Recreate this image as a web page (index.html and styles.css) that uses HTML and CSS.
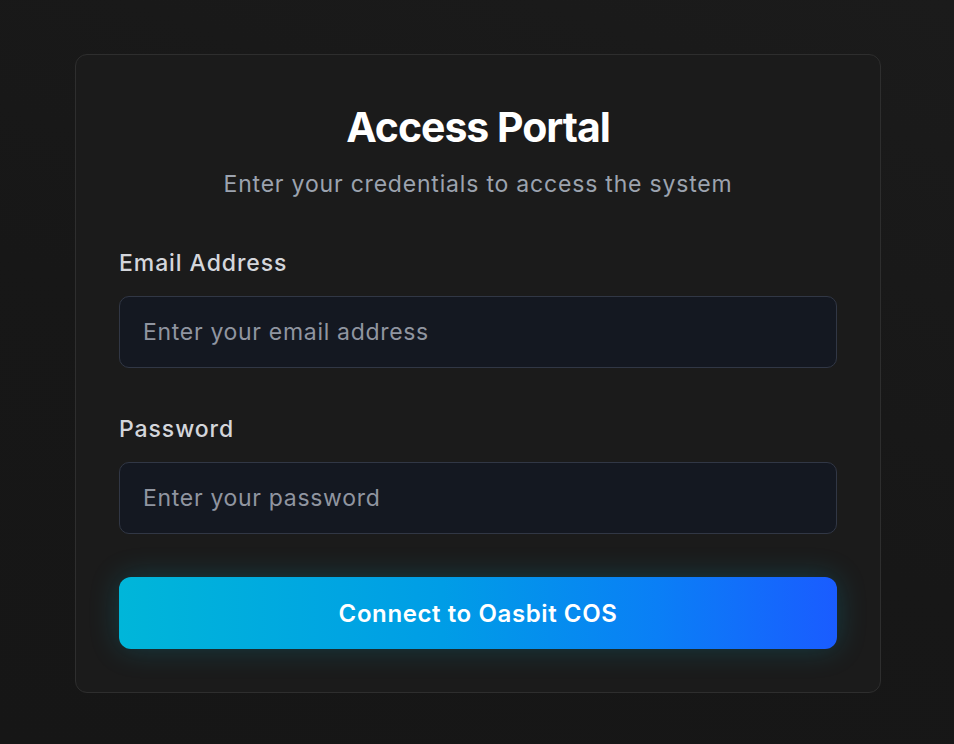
FILE: index.html
```html
<!DOCTYPE html>
<html lang="en">
<head>
  <meta charset="UTF-8">
  <meta name="viewport" content="width=device-width, initial-scale=1.0">
  <title>Access Portal</title>
  <link rel="stylesheet" href="styles.css">
</head>
<body>
  <div class="container">
    <form class="card" onsubmit="return false;">
      <h1 class="title">Access Portal</h1>
      <p class="subtitle">Enter your credentials to access the system</p>

      <div class="field">
        <label for="email">Email Address</label>
        <input type="email" id="email" placeholder="Enter your email address">
      </div>

      <div class="field">
        <label for="password">Password</label>
        <input type="password" id="password" placeholder="Enter your password">
      </div>

      <button type="submit" class="connect-btn">Connect to Oasbit COS</button>
    </form>
  </div>
</body>
</html>
```

FILE: styles.css
```css
* {
  box-sizing: border-box;
}

body {
  font-family: Inter, "Noto Sans", sans-serif;
  background: linear-gradient(200deg, #1b1b1b 0%, #171717 55%, #161616 100%);
  margin: 0;
  padding: 0;
  min-height: 100vh;
  color: #fff;
}

.container {
  padding: 54px 74px 0 75px;
}

.card {
  width: 806px;
  background-color: #1b1b1b;
  border: 1px solid #2e2e2e;
  border-radius: 12px;
  padding: 43px;
}

.title {
  margin: 0;
  text-align: center;
  font-size: 41px;
  font-weight: 700;
  letter-spacing: -0.025em;
  line-height: 59px;
}

.subtitle {
  margin: 11px 0 0;
  text-align: center;
  font-size: 23px;
  line-height: 32px;
  letter-spacing: 0.035em;
  color: #9ca3af;
}

.field {
  margin-top: 47px;
}

.field + .field {
  margin-top: 45px;
}

.field label {
  display: block;
  font-size: 23px;
  line-height: 32px;
  font-weight: 500;
  letter-spacing: 0.04em;
  color: #d4d6db;
  margin-bottom: 17px;
}

.field input {
  display: block;
  width: 100%;
  height: 72px;
  padding: 0 23px;
  background-color: #141821;
  border: 1px solid #313745;
  border-radius: 10px;
  font-family: inherit;
  font-size: 23px;
  letter-spacing: 0.03em;
  color: #e5e7eb;
  outline: none;
}

.field input::placeholder {
  color: #9095a0;
}

.connect-btn {
  display: block;
  width: 100%;
  height: 72px;
  margin-top: 43px;
  border: none;
  border-radius: 12px;
  background: linear-gradient(90deg, #00b6d9 0%, #009de6 45%, #0a7ff6 75%, #1a5cff 100%);
  color: #fff;
  font-family: inherit;
  font-size: 24px;
  font-weight: 600;
  letter-spacing: 0.025em;
  cursor: pointer;
  box-shadow: 0 0 30px rgba(6, 182, 212, 0.22);
}
```
